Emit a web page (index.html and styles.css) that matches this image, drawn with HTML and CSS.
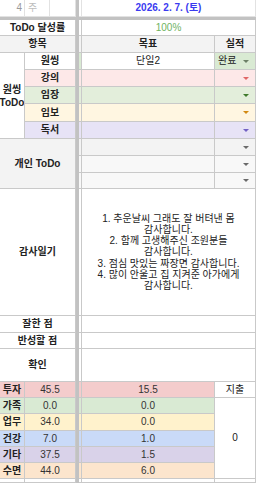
FILE: index.html
```html
<!DOCTYPE html>
<html lang="ko">
<head>
<meta charset="utf-8">
<link rel="stylesheet" href="styles.css">
</head>
<body>
<div class="sheet">
  <div class="pane top">
    <div class="grid left top-left">
      <div class="c wk-num">4</div>
      <div class="c wk">주</div>
      <div class="c"></div>
    </div>
    <div class="vbar"></div>
    <div class="grid right top-right">
      <div class="c"></div>
      <div class="c date span2">2026. 2. 7. (토)</div>
    </div>
  </div>
  <div class="hbar"></div>
  <div class="pane body">
    <div class="grid left body-left">
      <div class="c b span3">ToDo 달성률</div>
      <div class="c b span3 gray">항목</div>
      <div class="c b onething">원씽<br>ToDo</div>
      <div class="c b span2">원씽</div>
      <div class="c b span2 pink-l">강의</div>
      <div class="c b span2 green-l">임장</div>
      <div class="c b span2 yellow-l">임보</div>
      <div class="c b span2 purple-l">독서</div>
      <div class="c b span3 gray personal">개인 ToDo</div>
      <div class="c b span3">감사일기</div>
      <div class="c b span3">잘한 점</div>
      <div class="c b span3">반성할 점</div>
      <div class="c b span3">확인</div>
      <div class="c b pink">투자</div><div class="c num span2 pink">45.5</div>
      <div class="c b green">가족</div><div class="c num span2 green">0.0</div>
      <div class="c b yellow">업무</div><div class="c num span2 yellow">34.0</div>
      <div class="c b blue">건강</div><div class="c num span2 blue">7.0</div>
      <div class="c b purple">기타</div><div class="c num span2 purple">37.5</div>
      <div class="c b orange">수면</div><div class="c num span2 orange">44.0</div>
      <div class="c"></div><div class="c span2"></div>
    </div>
    <div class="vbar"></div>
    <div class="grid right body-right">
      <div class="c"></div>
      <div class="c span2 pct">100%</div>

      <div class="c gray"></div>
      <div class="c b gray">목표</div>
      <div class="c b gray">실적</div>

      <div class="c green-m"></div>
      <div class="c">단일2</div>
      <div class="c dd-cell green-m"><span class="dd-text">완료</span><span class="dd dd-gray"></span></div>

      <div class="c pink-l"></div>
      <div class="c pink-l"></div>
      <div class="c dd-cell pink-l"><span class="dd dd-red"></span></div>

      <div class="c green-l"></div>
      <div class="c green-l"></div>
      <div class="c dd-cell green-l"><span class="dd dd-green"></span></div>

      <div class="c yellow-l"></div>
      <div class="c yellow-l"></div>
      <div class="c dd-cell yellow-l"><span class="dd dd-orange"></span></div>

      <div class="c purple-l"></div>
      <div class="c purple-l"></div>
      <div class="c dd-cell purple-l"><span class="dd dd-purple"></span></div>

      <div class="c gray"></div>
      <div class="c gray"></div>
      <div class="c dd-cell gray"><span class="dd dd-dark"></span></div>

      <div class="c light"></div>
      <div class="c light"></div>
      <div class="c dd-cell light"><span class="dd dd-dark"></span></div>

      <div class="c light"></div>
      <div class="c light"></div>
      <div class="c dd-cell light"><span class="dd dd-dark"></span></div>

      <div class="c"></div>
      <div class="c span2 diary">1. 추운날씨 그래도 잘 버텨낸 몸<br>감사합니다.<br>2. 함께 고생해주신 조원분들<br>감사합니다.<br>3. 점심 맛있는 짜장면 감사합니다.<br>4. 많이 안울고 집 지켜준 아가에게<br>감사합니다.</div>

      <div class="c"></div><div class="c span2"></div>
      <div class="c"></div><div class="c span2"></div>
      <div class="c"></div><div class="c span2"></div>

      <div class="c pink"></div><div class="c num pink">15.5</div><div class="c">지출</div>
      <div class="c green"></div><div class="c num green">0.0</div><div class="c zero">0</div>
      <div class="c yellow"></div><div class="c num yellow">0.0</div>
      <div class="c blue"></div><div class="c num blue">1.0</div>
      <div class="c purple"></div><div class="c num purple">1.5</div>
      <div class="c orange"></div><div class="c num orange">6.0</div>
      <div class="c"></div><div class="c"></div><div class="c"></div>
    </div>
  </div>
</div>
</body>
</html>
```
FILE: styles.css
```css
html, body {
  margin: 0;
  padding: 0;
  background: #ffffff;
}

.sheet {
  width: 256px;
  height: 483px;
  overflow: hidden;
  font-family: "Liberation Sans", "Noto Sans CJK KR", sans-serif;
  font-size: 10px;
  color: #222222;
}

.pane {
  display: flex;
}

.vbar {
  width: 3px;
  flex: none;
  background: #c2c2c2;
}

.hbar {
  height: 3px;
  background: #c2c2c2;
}

.grid {
  display: grid;
  flex: none;
}

.left {
  width: 76px;
  grid-template-columns: 25px 25px 26px;
}

.right {
  width: 177px;
  grid-template-columns: 3px 133px 41px;
}

.top-left,
.top-right {
  grid-template-rows: 17px;
}

.body-left,
.body-right {
  grid-template-rows: 16px 17px 17px 17px 17px 18px 17px 17px 17px 16px 127px 17px 16px 33px 16px 16px 17px 16px 16px 16px 4px;
}

.c {
  box-sizing: border-box;
  display: flex;
  align-items: center;
  justify-content: center;
  text-align: center;
  border-right: 1px solid #c9c9c9;
  border-bottom: 1px solid #c9c9c9;
  line-height: 1;
  white-space: nowrap;
  overflow: hidden;
  min-width: 0;
}

.top .c {
  border-color: #e2e2e2;
}

.b {
  font-weight: bold;
}

.span2 {
  grid-column: span 2;
}

.span3 {
  grid-column: span 3;
}

.onething {
  grid-row: span 5;
  line-height: 13px;
  white-space: normal;
  font-size: 10px;
}

.personal {
  grid-row: span 3;
}

.wk-num {
  justify-content: flex-end;
  padding-right: 2px;
  color: #9a9a9a;
}

.wk {
  justify-content: flex-start;
  padding-left: 3px;
  color: #bdbdbd;
}

.date {
  color: #3a3af0;
  font-weight: bold;
}

.pct {
  color: #6fb35f;
}

.num {
  color: #333333;
}

.diary {
  white-space: normal;
  line-height: 11.2px;
  color: #222222;
}

.zero {
  grid-row: span 5;
}

.dd-cell {
  justify-content: flex-end;
  padding-right: 6px;
}

.dd-text {
  margin-right: auto;
  padding-left: 3px;
}

.dd {
  width: 0;
  height: 0;
  border-left: 3px solid transparent;
  border-right: 3px solid transparent;
  border-top: 3px solid currentColor;
}

.dd-gray { color: #6b7f66; }
.dd-red { color: #e06666; }
.dd-green { color: #3f7a2b; }
.dd-orange { color: #d38a12; }
.dd-purple { color: #7261c4; }
.dd-dark { color: #6a6a6a; }

.gray { background: #f3f3f3; }
.light { background: #f8f8f8; }
.green-m { background: #d9ead3; }

.pink-l { background: #fde8e8; }
.green-l { background: #e3eedb; }
.yellow-l { background: #fff6e1; }
.purple-l { background: #e7e3f6; }

.pink { background: #f4cccc; }
.green { background: #d9ead3; }
.yellow { background: #fff2cc; }
.blue { background: #c9daf8; }
.purple { background: #d9d2e9; }
.orange { background: #fce5cd; }
```
